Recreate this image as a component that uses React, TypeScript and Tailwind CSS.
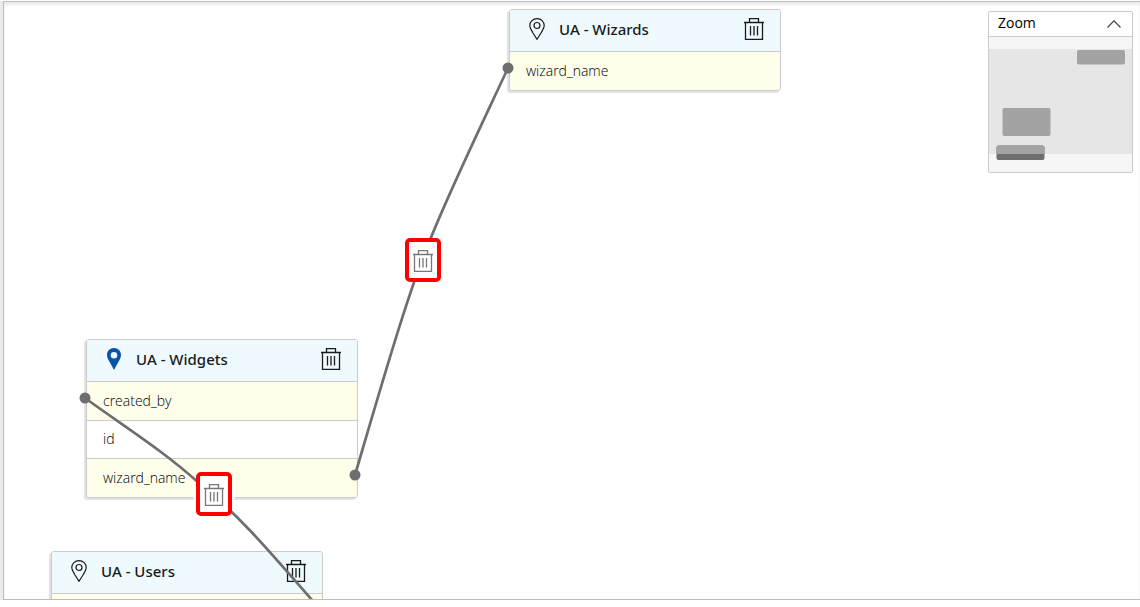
import { useState } from "react";

interface Field {
    name: string;
    linked: boolean;
}

interface TableNode {
    title: string;
    pinned: boolean;
    x: number;
    y: number;
    fields: Field[];
}

const NODES: TableNode[] = [
    {
        title: "UA - Wizards",
        pinned: false,
        x: 505,
        y: 7,
        fields: [{ name: "wizard_name", linked: true }],
    },
    {
        title: "UA - Widgets",
        pinned: true,
        x: 82,
        y: 337,
        fields: [
            { name: "created_by", linked: true },
            { name: "id", linked: false },
            { name: "wizard_name", linked: true },
        ],
    },
    {
        title: "UA - Users",
        pinned: false,
        x: 47,
        y: 549,
        fields: [{ name: "", linked: true }],
    },
];

const LINKS = [
    { id: "wizard_name", d: "M504 66C476 126 446 188 426 238C404 290 376 388 351 473", x: 401, y: 236 },
    { id: "created_by", d: "M81 396C121 425 161 450 196 482C236 514 266 550 308 598", x: 192, y: 470 },
];

const PORTS = [
    { x: 504, y: 66 },
    { x: 351, y: 473 },
    { x: 81, y: 396 },
];

function TrashIcon() {
    return (
        <svg width="20" height="22" viewBox="0 0 20 22" fill="none" stroke="currentColor" strokeWidth="1.3" aria-hidden="true">
            <path d="M0 4.500H20M5.500 4.500V.6H14.500V4.500M1.500 4.500V21.300H18.500V4.500M6.500 8V17.500M10 8V17.500M13.500 8V17.500" />
        </svg>
    );
}

function PinIcon({ filled }: { filled: boolean }) {
    if (filled) {
        return (
            <svg width="16" height="22" viewBox="0 0 16 22" fill="#0854a8" aria-hidden="true">
                <path fillRule="evenodd" d="M8 0C4 0 1 3 1 7C1 10 3 13 4.5 15.500L8 22L11.500 15.500C13 13 15 10 15 7C15 3 12 0 8 0ZM8 4A3.300 3.300 0 1 1 8 10.600A3.300 3.300 0 1 1 8 4Z" />
            </svg>
        );
    }
    return (
        <svg width="16" height="22" viewBox="0 0 16 22" fill="none" stroke="#1a1a1a" strokeWidth="1.2" aria-hidden="true">
            <path d="M8 .7C4 .7 .8 3.700 .8 7.600C.8 10 2.500 12.500 4 15L8 21.300L12 15C13.500 12.500 15.200 10 15.200 7.600C15.200 3.700 12 .7 8 .7Z" />
            <circle cx="8" cy="7.5" r="3" />
        </svg>
    );
}

function NodeCard({ node }: { node: TableNode }) {
    return (
        <section
            className="absolute w-[272px] overflow-hidden rounded-[3px] border border-[#cbcbcb] bg-white shadow-[-2px_2px_1px_0_#e2e2e2]"
            style={{ left: node.x, top: node.y }}
        >
            <header className="flex h-[41px] items-center bg-[#effaff] pr-4 pb-[3px] pl-[19px]">
                <PinIcon filled={node.pinned} />
                <h2 className="ml-3.5 flex-1 font-['Noto_Sans','Open_Sans',sans-serif] text-[15px] font-medium text-[#1a1a1a]">
                    {node.title}
                </h2>
                <button type="button" aria-label={`Remove ${node.title}`} className="text-[#1a1a1a]">
                    <TrashIcon />
                </button>
            </header>
            <ul>
                {node.fields.map((field) => (
                    <li
                        key={field.name}
                        className={`flex items-center border-t border-[#cbcbcb] px-4 pb-0.5 text-[14px] font-light text-black ${
                            field.linked ? "h-[39px] bg-[#fffeeb]" : "h-[38px] bg-white"
                        }`}
                    >
                        {field.name}
                    </li>
                ))}
            </ul>
        </section>
    );
}

function ZoomPanel() {
    const [open, setOpen] = useState(true);

    return (
        <aside className="absolute top-[9px] right-[7px] w-[145px] rounded-[2px] border border-[#cbcbcb] bg-white">
            <div className="flex h-6 items-center justify-between pr-[11px] pl-[9px]">
                <h2 className="pb-[3px] text-[14px] text-black">Zoom</h2>
                <button type="button" aria-label="Toggle zoom panel" aria-expanded={open} onClick={() => setOpen(!open)}>
                    <svg width="14" height="8" viewBox="0 0 14 8" fill="none" stroke="#444" strokeWidth="1.2" aria-hidden="true">
                        <path d="M.5 7.500L7 .8L13.500 7.500" />
                    </svg>
                </button>
            </div>
            {open && (
                <svg className="block h-[136px] w-full border-t border-[#cbcbcb] bg-[#f6f6f6]" role="img" aria-label="Diagram overview">
                    <rect y="12" width="100%" height="105" fill="#e6e6e6" />
                    <rect x="88" y="13" width="48" height="14.500" rx="2" fill="#a3a3a3" />
                    <rect x="13.500" y="71" width="48" height="28" rx="2" fill="#a3a3a3" />
                    <rect x="7.500" y="108.500" width="48" height="14.500" rx="2" fill="#6e6e6e" />
                    <path d="M7.500 117V110.500Q7.500 108.500 9.500 108.500H53.500Q55.500 108.500 55.500 110.500V117Z" fill="#a3a3a3" />
                </svg>
            )}
        </aside>
    );
}

export default function App() {
    return (
        <div className="flex h-screen flex-col bg-white pt-px pb-[7px] font-['Open_Sans',sans-serif]">
            <div className="flex min-h-0 flex-1 bg-[#ebebeb] pl-[3px]">
                <main className="relative flex-1 overflow-hidden border-y border-l border-[#bdbdbd] bg-white shadow-[inset_0_3px_3px_#ececec]">
                    {NODES.map((node) => (
                        <NodeCard key={node.title} node={node} />
                    ))}

                    {/* Connectors run over the cards */}
                    <svg className="pointer-events-none absolute inset-0 h-full w-full" aria-hidden="true">
                        {LINKS.map((link) => (
                            <path key={link.id} d={link.d} fill="none" stroke="#6e6e6e" strokeWidth="2.7" />
                        ))}
                        {LINKS.map((link) => (
                            <circle key={link.id} cx={link.x + 18} cy={link.y + 22} r="21" fill="#fff" />
                        ))}
                        {PORTS.map((port, i) => (
                            <circle key={i} cx={port.x} cy={port.y} r="5.5" fill="#6e6e6e" />
                        ))}
                    </svg>

                    {LINKS.map((link) => (
                        <button
                            key={link.id}
                            type="button"
                            aria-label={`Remove link ${link.id}`}
                            className="absolute flex h-11 w-9 items-center justify-center rounded-[5px] border-4 border-[#fe0000] bg-white pt-0.5 text-[#777]"
                            style={{ left: link.x, top: link.y }}
                        >
                            <TrashIcon />
                        </button>
                    ))}

                    <ZoomPanel />
                </main>
            </div>
        </div>
    );
}
